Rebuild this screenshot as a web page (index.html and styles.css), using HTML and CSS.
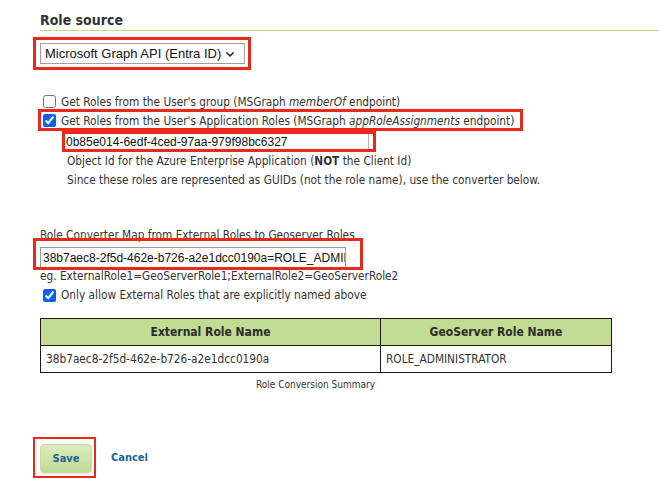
FILE: index.html
```html
<!DOCTYPE html>
<html lang="en">
<head>
<meta charset="utf-8">
<title>Role source</title>
<link rel="stylesheet" href="styles.css">
</head>
<body>
<div class="page">
  <h2 class="section-title">Role source</h2>

  <div class="source-row">
    <span class="select-wrap mark mark-select">
      <select class="source-select">
        <option>Microsoft Graph API (Entra ID)</option>
      </select>
      <svg class="chevron" width="8" height="5" viewBox="0 0 8 5"><path d="M0.8 0.8 L4 4 L7.2 0.8" fill="none" stroke="#222" stroke-width="1.5" stroke-linecap="round" stroke-linejoin="round"/></svg>
    </span>
  </div>

  <div class="checks">
    <label class="check"><input type="checkbox"><span>Get Roles from the User's group (MSGraph <em>memberOf</em> endpoint)</span></label>
    <label class="check mark mark-check"><input type="checkbox" checked><span>Get Roles from the User's Application Roles (MSGraph <em>appRoleAssignments</em> endpoint)</span></label>
    <div class="sub">
      <div class="id-field mark mark-id"><input class="text-input id-input" type="text" value="0b85e014-6edf-4ced-97aa-979f98bc6327"></div>
      <p class="note">Object Id for the Azure Enterprise Application (<b>NOT</b> the Client Id)</p>
      <p class="note">Since these roles are represented as GUIDs (not the role name), use the converter below.</p>
    </div>
  </div>

  <div class="converter">
    <div class="field-label">Role Converter Map from External Roles to Geoserver Roles</div>
    <div class="map-field mark mark-map"><input class="text-input map-input" type="text" value="38b7aec8-2f5d-462e-b726-a2e1dcc0190a=ROLE_ADMINISTRATOR"></div>
    <div class="hint">eg. ExternalRole1=GeoServerRole1;ExternalRole2=GeoServerRole2</div>
    <label class="check check-only"><input type="checkbox" checked><span>Only allow External Roles that are explicitly named above</span></label>
  </div>

  <table class="role-table">
    <thead>
      <tr><th class="col-ext">External Role Name</th><th>GeoServer Role Name</th></tr>
    </thead>
    <tbody>
      <tr><td>38b7aec8-2f5d-462e-b726-a2e1dcc0190a</td><td>ROLE_ADMINISTRATOR</td></tr>
    </tbody>
  </table>
  <div class="table-caption">Role Conversion Summary</div>

  <div class="actions">
    <div class="save-box"><button class="btn-save" type="button">Save</button></div>
    <a class="link-cancel" href="#">Cancel</a>
  </div>
</div>
</body>
</html>
```

FILE: styles.css
```css
html, body {
  margin: 0;
  padding: 0;
  background: #ffffff;
}

body {
  font-family: "DejaVu Sans Condensed", "DejaVu Sans", sans-serif;
  font-size: 11.75px;
  color: #333333;
}

.page {
  padding-left: 40px;
}

.section-title {
  margin: 11px 0 0;
  font-size: 14px;
  font-weight: bold;
  line-height: 18px;
  padding-bottom: 1px;
  border-bottom: 1px solid #bddc8f;
  color: #333333;
}

/* red annotation boxes */
.mark {
  position: relative;
}

.mark::after {
  content: "";
  position: absolute;
  border: 3px solid #e8291c;
  pointer-events: none;
}

.mark-select::after { top: -6px; right: -6px; bottom: -6px; left: -7px; }
.mark-check::after { top: -2px; right: -9px; bottom: -1px; left: -2px; }
.mark-id::after { top: -2px; right: -2px; bottom: -2px; left: -2px; }
.mark-map::after { top: -9px; right: -17px; bottom: -2px; left: -7px; }

/* select */
.source-row {
  margin-top: 12px;
  height: 21px;
}

.select-wrap {
  display: inline-block;
  vertical-align: top;
}

.source-select {
  display: block;
  appearance: none;
  -webkit-appearance: none;
  width: 205px;
  height: 21px;
  margin: 0;
  padding: 0 0 0 4px;
  border: 1px solid #a0a0a0;
  border-radius: 0;
  background: #ffffff;
  font-family: "Liberation Sans", Arial, sans-serif;
  font-size: 13px;
  color: #111111;
}

.chevron {
  position: absolute;
  right: 11px;
  top: 9px;
}

/* checkboxes */
.checks {
  margin-top: 28px;
}

.check {
  display: flex;
  align-items: center;
  height: 19px;
  width: fit-content;
}

.check input {
  flex: none;
  width: 13px;
  height: 13px;
  margin: 0 5px 0 3px;
  accent-color: #0b62f2;
}

.check em {
  font-style: italic;
}

.sub {
  padding-left: 24px;
}

.id-field {
  margin-top: 3px;
  width: 310px;
  height: 17px;
}

.text-input {
  display: block;
  box-sizing: border-box;
  margin: 0;
  border: 1px solid #b5b5b5;
  border-radius: 0;
  background: #ffffff;
  font-family: "Liberation Sans", Arial, sans-serif;
  font-size: 12px;
  color: #111111;
  outline: none;
}

.id-input {
  width: 305px;
  height: 17px;
  padding: 0 0 0 1px;
}

.note {
  margin: 0;
  padding-left: 3px;
  line-height: 19px;
}

.sub .note:first-of-type {
  margin-top: 2px;
}

/* converter */
.converter {
  margin-top: 36px;
}

.field-label {
  line-height: 19px;
}

.map-field {
  margin-top: 2px;
  width: 306px;
  height: 21px;
}

.map-input {
  width: 306px;
  height: 21px;
  padding: 0 0 0 2px;
  border-color: #9a9a9a;
}

.hint {
  line-height: 17px;
}

.check-only {
  height: 20px;
}

/* table */
.role-table {
  margin-top: 13px;
  width: 572px;
  border-collapse: collapse;
  border: 1px solid #1a1a1a;
}

.role-table th,
.role-table td {
  border: 1px solid #1a1a1a;
  height: 27px;
  padding: 0 4px;
  box-sizing: border-box;
}

.role-table th {
  background: #c2dc94;
  font-size: 12px;
  font-weight: bold;
  text-align: center;
  color: #2b2b2b;
}

.role-table .col-ext {
  width: 340px;
}

.role-table td {
  text-align: left;
  padding-left: 5px;
}

.table-caption {
  margin-top: 6px;
  width: 551px;
  text-align: center;
  font-size: 10px;
  line-height: 12px;
}

/* actions */
.actions {
  margin-top: 46px;
  margin-left: -7px;
  display: flex;
  align-items: center;
  gap: 15px;
}

.save-box {
  padding: 5px 2px 3px 5px;
  border: 2px solid #e8291c;
}

.btn-save {
  display: block;
  width: 52px;
  height: 29px;
  margin: 0;
  padding: 0;
  border: 1px solid #c4dba0;
  border-radius: 4px;
  background: linear-gradient(#dcebc2, #c0da92);
  box-shadow: 0 1px 1px rgba(0, 0, 0, 0.12);
  font-family: "DejaVu Sans Condensed", "DejaVu Sans", sans-serif;
  font-size: 11px;
  font-weight: bold;
  color: #1b6592;
  cursor: pointer;
}

.link-cancel {
  font-weight: bold;
  font-size: 11px;
  color: #1b6592;
  text-decoration: none;
}
```
